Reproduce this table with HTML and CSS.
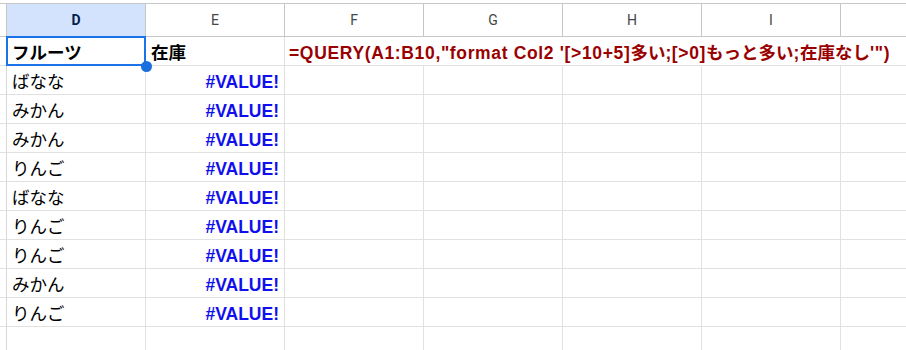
FILE: index.html
```html
<!DOCTYPE html>
<html lang="ja">
<head>
<meta charset="utf-8">
<title>Sheet</title>
<link rel="stylesheet" href="styles.css">
</head>
<body>
<div class="sheet">
  <div class="hd stub"></div>
  <div class="hd sel">D</div>
  <div class="hd">E</div>
  <div class="hd">F</div>
  <div class="hd">G</div>
  <div class="hd">H</div>
  <div class="hd">I</div>
  <div class="hd last"></div>

  <div class="c stub"></div>
  <div class="c b active">フルーツ<span class="handle"></span></div>
  <div class="c b">在庫</div>
  <div class="c formula span">=QUERY(A1:B10,"format Col2 '[&gt;10+5]<span class="jp">多い</span>;[&gt;0]<span class="jp">もっと多い</span>;<span class="jp">在庫なし</span>'")</div>

  <div class="c stub"></div><div class="c">ばなな</div><div class="c err">#VALUE!</div><div class="c"></div><div class="c"></div><div class="c"></div><div class="c"></div><div class="c last"></div>
  <div class="c stub"></div><div class="c">みかん</div><div class="c err">#VALUE!</div><div class="c"></div><div class="c"></div><div class="c"></div><div class="c"></div><div class="c last"></div>
  <div class="c stub"></div><div class="c">みかん</div><div class="c err">#VALUE!</div><div class="c"></div><div class="c"></div><div class="c"></div><div class="c"></div><div class="c last"></div>
  <div class="c stub"></div><div class="c">りんご</div><div class="c err">#VALUE!</div><div class="c"></div><div class="c"></div><div class="c"></div><div class="c"></div><div class="c last"></div>
  <div class="c stub"></div><div class="c">ばなな</div><div class="c err">#VALUE!</div><div class="c"></div><div class="c"></div><div class="c"></div><div class="c"></div><div class="c last"></div>
  <div class="c stub"></div><div class="c">りんご</div><div class="c err">#VALUE!</div><div class="c"></div><div class="c"></div><div class="c"></div><div class="c"></div><div class="c last"></div>
  <div class="c stub"></div><div class="c">りんご</div><div class="c err">#VALUE!</div><div class="c"></div><div class="c"></div><div class="c"></div><div class="c"></div><div class="c last"></div>
  <div class="c stub"></div><div class="c">みかん</div><div class="c err">#VALUE!</div><div class="c"></div><div class="c"></div><div class="c"></div><div class="c"></div><div class="c last"></div>
  <div class="c stub"></div><div class="c">りんご</div><div class="c err">#VALUE!</div><div class="c"></div><div class="c"></div><div class="c"></div><div class="c"></div><div class="c last"></div>
  <div class="c stub"></div><div class="c"></div><div class="c"></div><div class="c"></div><div class="c"></div><div class="c"></div><div class="c"></div><div class="c last"></div>
</div>
</body>
</html>
```

FILE: styles.css
```css
html, body {
  margin: 0;
  padding: 0;
  background: #fff;
  overflow: hidden;
}
body {
  width: 906px;
  height: 350px;
}
.sheet {
  margin-top: 3px;
  border-top: 1px solid #c4c7c5;
  display: grid;
  grid-template-columns: 7px repeat(7, 139px);
  grid-template-rows: 33px repeat(11, 29px);
  font-family: "Liberation Sans", "Noto Sans CJK JP", sans-serif;
  font-size: 17.5px;
  color: #000;
}
.hd {
  box-sizing: border-box;
  border-right: 1px solid #c4c7c5;
  border-bottom: 1px solid #c4c7c5;
  display: flex;
  align-items: center;
  justify-content: center;
  font-family: Roboto, "Liberation Sans", sans-serif;
  font-size: 14px;
  color: #444746;
  background: #fff;
}
.hd.sel {
  background: #d3e3fd;
  color: #041e49;
  font-weight: 700;
}
.c {
  box-sizing: border-box;
  border-right: 1px solid #e1e1e1;
  border-bottom: 1px solid #e1e1e1;
  display: flex;
  align-items: flex-end;
  padding: 0 5px 2px 5px;
  line-height: 20px;
  white-space: nowrap;
}
.c.stub {
  border-right-color: #d6d7d7;
  padding: 0;
}
.hd.last, .c.last {
  border-right: none;
}
.b {
  font-weight: 700;
}
.err {
  justify-content: flex-end;
  color: #1010ee;
  font-weight: 700;
}
.formula {
  display: block;
  padding-top: 6px;
  color: #990000;
  font-weight: 700;
  padding-left: 4px;
  letter-spacing: 0.65px;
}
.jp {
  letter-spacing: 0;
}
.span {
  grid-column: 4 / -1;
  border-right: none;
  overflow: visible;
}
.active {
  position: relative;
}
.active::after {
  content: "";
  position: absolute;
  left: -1px;
  top: -1px;
  right: -1px;
  bottom: -1px;
  border: 2px solid #1a73e8;
  pointer-events: none;
}
.handle {
  position: absolute;
  right: -7px;
  bottom: -7px;
  width: 11px;
  height: 11px;
  border-radius: 50%;
  background: #1a6fdf;
  z-index: 2;
}
```
